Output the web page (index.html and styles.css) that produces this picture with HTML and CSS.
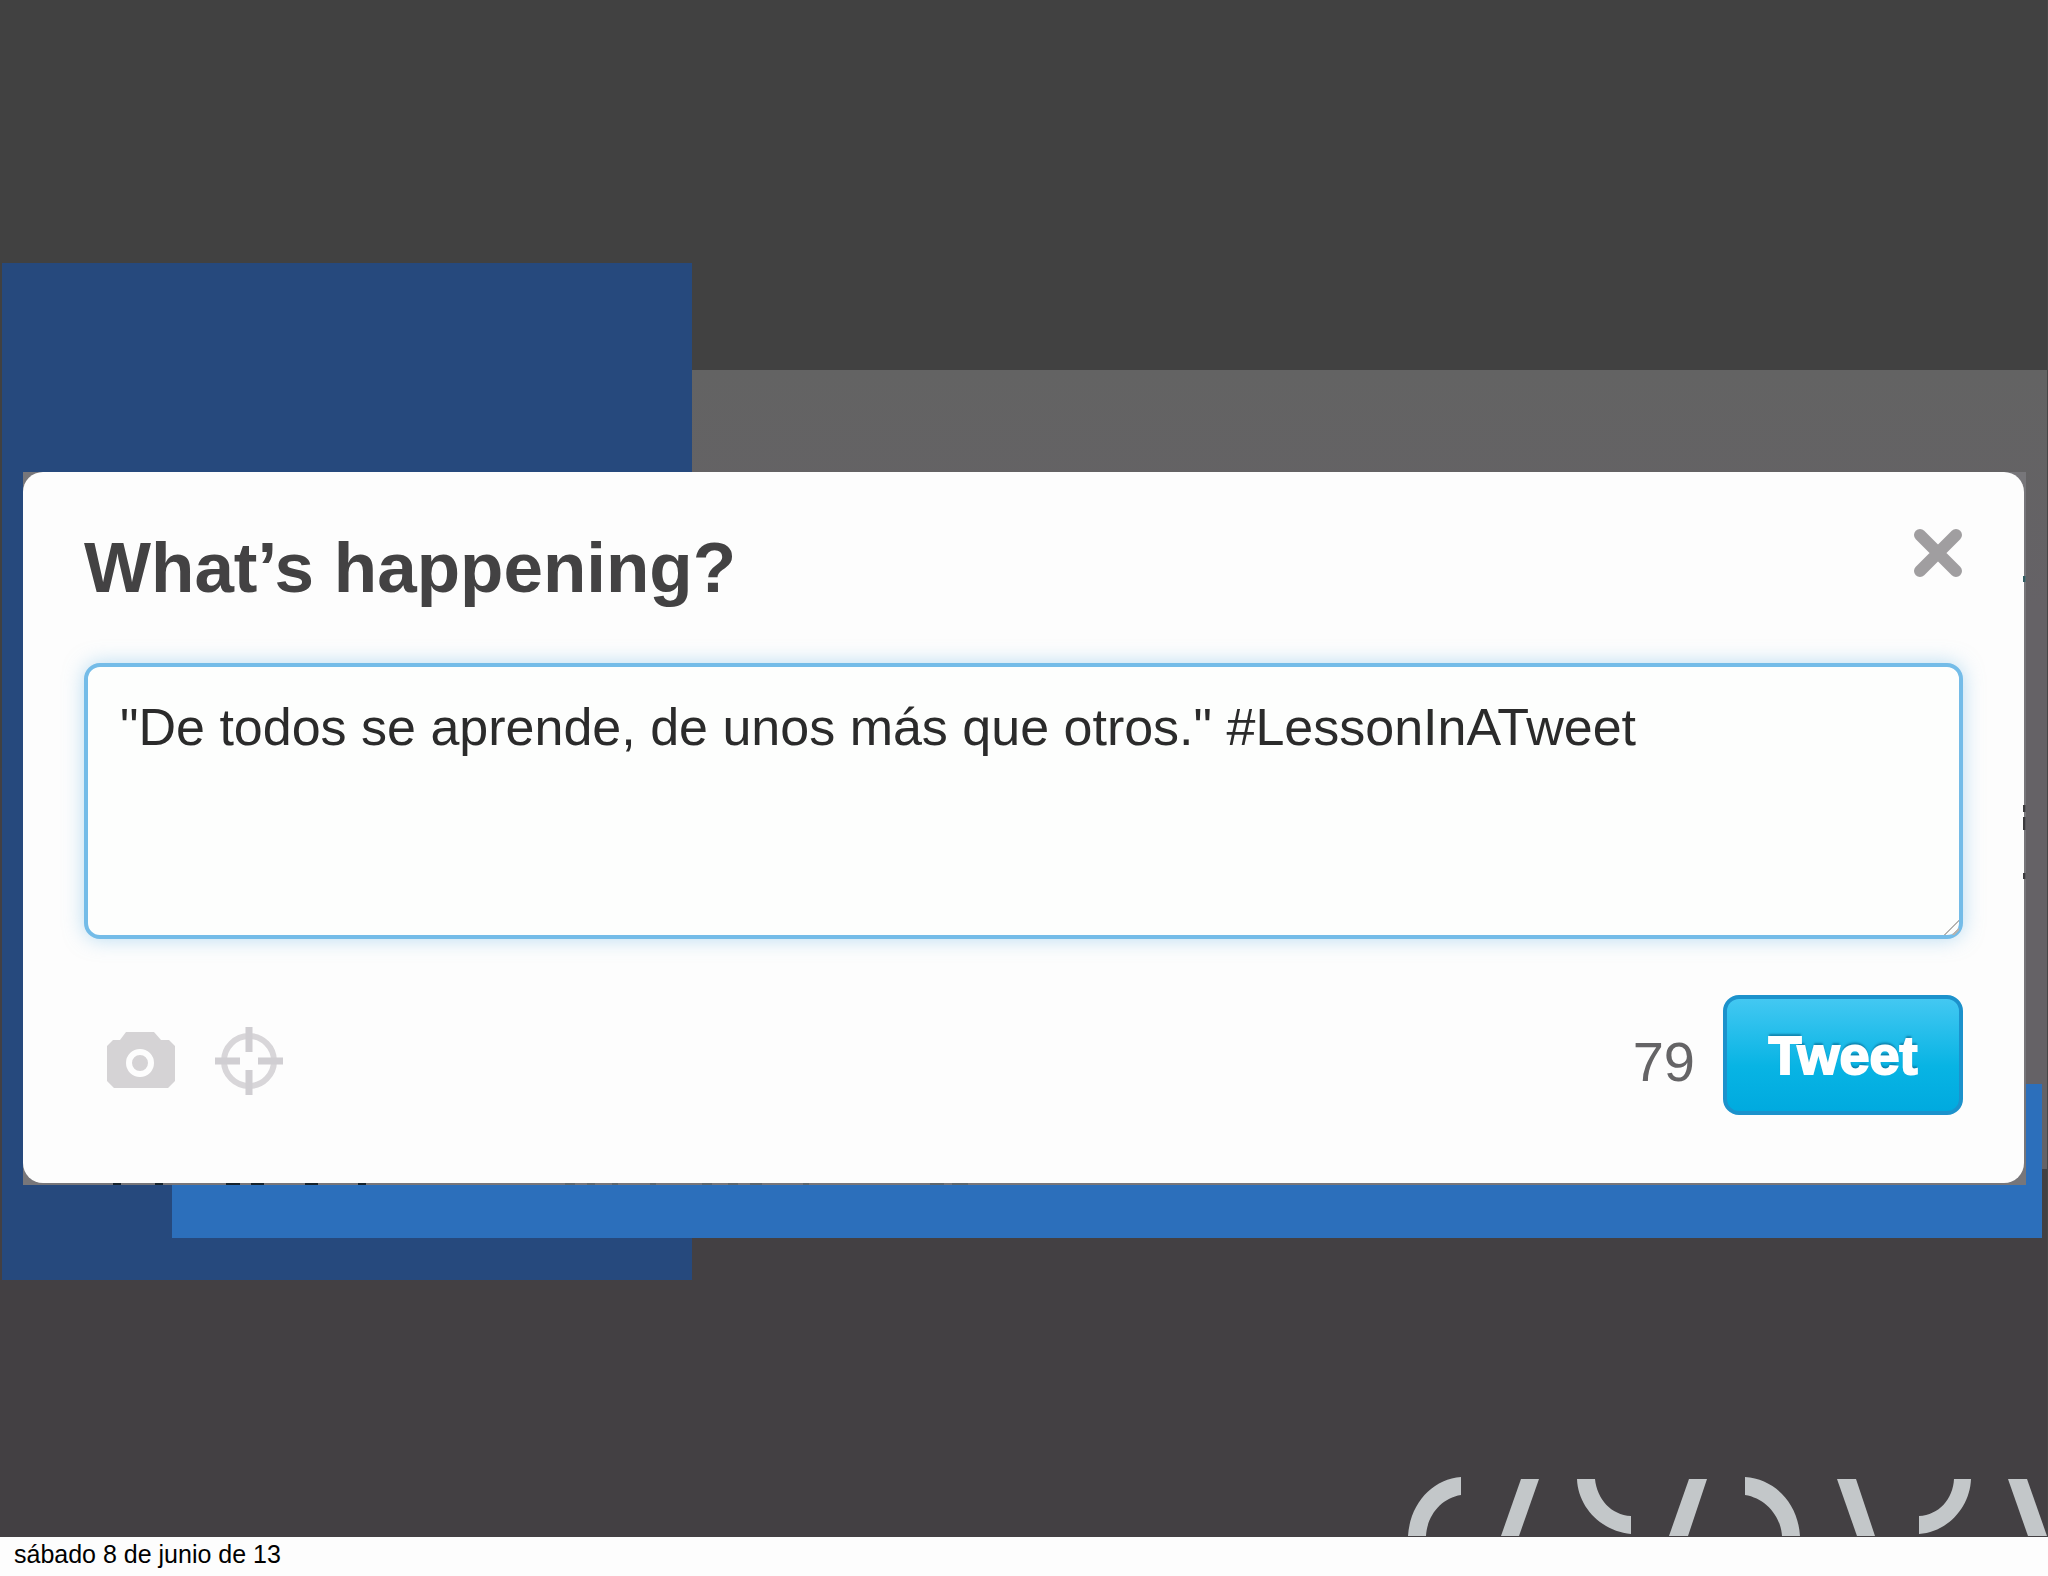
FILE: index.html
```html
<!DOCTYPE html>
<html lang="es">
<head>
    <meta charset="UTF-8">
    <meta name="viewport" content="width=device-width, initial-scale=1.0">
    <title>What’s happening?</title>
    <link rel="stylesheet" href="styles.css">
</head>
<body>
    <main class="slide">
        <div class="block block-navy"></div>
        <div class="block block-grey"></div>
        <div class="block block-blue"></div>

        <div class="frame">
            <form class="dialog">
                <header class="dialog-header">
                    <h1><label for="tweet">What’s happening?</label></h1>
                    <button type="button" class="icon-button" aria-label="Close">
                        <svg width="50" height="50" viewBox="0 0 50 50">
                            <path d="M7 7L43 43M43 7L7 43" stroke="#a09ea0" stroke-width="12" stroke-linecap="round"/>
                        </svg>
                    </button>
                </header>

                <textarea id="tweet" name="tweet" spellcheck="false">"De todos se aprende, de unos más que otros." #LessonInATweet</textarea>

                <div class="toolbar">
                    <div class="tools">
                        <button type="button" class="icon-button" aria-label="Add photo">
                            <svg width="70" height="70" viewBox="0 0 70 70">
                                <path d="M20 6H48L55 14H63L69 20V55L62 62H8L1 55V20L7 14H14Z" fill="#d5d3d5"/>
                                <circle cx="34" cy="37" r="11" fill="none" stroke="#fdfdfd" stroke-width="6"/>
                            </svg>
                        </button>
                        <button type="button" class="icon-button" aria-label="Add location">
                            <svg width="70" height="70" viewBox="0 0 70 70">
                                <circle cx="35" cy="35" r="25" fill="none" stroke="#d8d6d9" stroke-width="6"/>
                                <path d="M35 1V26M35 44V69M1 35H26M44 35H69" stroke="#d0ced2" stroke-width="7"/>
                            </svg>
                        </button>
                        <output class="counter" for="tweet">79</output>
                    </div>
                    <button type="submit" class="tweet-button">Tweet</button>
                </div>
            </form>
            <!-- tips of the slide text that show past the frame -->
            <svg class="edge-bottom" width="1000" height="2" viewBox="0 0 1000 2">
                <path d="M90 1h8M132 1h8M203 1h14M228 1h13M282 1h13M335 1h8" stroke="#17232c" stroke-width="2"/>
                <path d="M542 1h10M564 1h8M589 1h6M627 1h6M679 1h10M705 1h10M727 1h12M780 1h6M907 1h14M929 1h16" stroke="#5f666b" stroke-width="2"/>
            </svg>
            <svg class="edge-right" width="3" height="420" viewBox="0 0 3 420">
                <path d="M1 104v6" stroke="#315c62" stroke-width="3"/>
                <path d="M1 333v7M1 345v13M1 401v6" stroke="#3c3b3e" stroke-width="3"/>
            </svg>
        </div>

        <svg class="strokes" width="648" height="66" viewBox="0 0 648 66" fill="#c3c7c9">
            <path d="M9 65C11 32 34 8 62 6V24C42 27 28 45 27 65Z"/>
            <path d="M122 8H140L120 65H102Z"/>
            <path d="M178 8H196C198 28 212 44 232 45V63C202 60 179 36 178 8Z"/>
            <path d="M290 8H308L289 65H270Z"/>
            <path d="M346 6C376 8 399 32 401 65H383C382 45 366 27 346 24Z"/>
            <path d="M438 8H457L476 65H458Z"/>
            <path d="M555 8H572C571 36 549 61 520 63V45C540 44 554 28 555 8Z"/>
            <path d="M609 8H628L648 65H629Z"/>
        </svg>
    </main>
    <footer class="date">sábado 8 de junio de 13</footer>
</body>
</html>
```

FILE: styles.css
```css
* {
    box-sizing: border-box;
}

body {
    margin: 0;
    min-height: 100vh;
    display: flex;
    flex-direction: column;
    background-color: #fdfdfd;
    font-family: "Liberation Sans", Arial, sans-serif;
}

/* the coloured blocks and the dialog overlap on one grid */
.slide {
    flex: 1;
    display: grid;
    grid-template-columns: 2px 21px 149px 520px 1fr 16px 5px;
    grid-template-rows: 263px 107px 102px auto 85px 16px 53px 42px 1fr;
    background: linear-gradient(#414141 50%, #434043 50%);
    border-right: 1px solid #474747;
}

.block-navy {
    grid-area: 2 / 2 / 9 / 5;
    background-color: #26497d;
}

.block-grey {
    grid-area: 3 / 5 / 6 / 8;
    background: linear-gradient(#636363, #656266 30%);
}

.block-blue {
    grid-area: 5 / 4 / 8 / 7;
    background-color: #2c6fbb;
}

.frame {
    grid-area: 4 / 3 / 7 / 6;
    position: relative;
    padding: 0 2px 2px 0;
    background-color: #77767a;
}

.dialog {
    padding: 56px 61px 68px 61px;
    border-radius: 20px;
    background-color: #fdfdfd;
}

.dialog-header {
    display: flex;
    justify-content: space-between;
    align-items: flex-start;
    margin-bottom: 55px;
}

h1 {
    margin: 0;
    color: #434243;
    font-size: 71px;
    line-height: 80px;
}

.icon-button {
    padding: 0;
    border: none;
    background: none;
    cursor: pointer;
}

.icon-button svg {
    display: block;
}

textarea {
    display: block;
    width: 100%;
    height: 276px;
    padding: 30px 32px;
    border: 4px solid #74bce8;
    border-radius: 16px;
    outline: none;
    background-color: #fdfefd;
    box-shadow: 0 0 20px rgba(116, 188, 232, 0.5);
    color: #2b2b2b;
    font-family: inherit;
    font-size: 52px;
    line-height: 60px;
    resize: vertical;
}

textarea::-webkit-scrollbar {
    width: 18px;
}

textarea::-webkit-resizer {
    background: linear-gradient(135deg, transparent 48%, #b5b3b0 48%, #b5b3b0 56%, transparent 56%, transparent 74%, #b5b3b0 74%, #b5b3b0 84%, transparent 84%);
}

.toolbar {
    display: flex;
    gap: 28px;
    margin-top: 56px;
}

.tools {
    flex: 1;
    display: flex;
    align-items: center;
    gap: 38px;
    padding: 12px 0 0 22px;
}

.counter {
    margin-left: auto;
    color: #656466;
    font-size: 56px;
}

.tweet-button {
    width: 240px;
    height: 120px;
    padding: 0;
    border: 4px solid #1c92cc;
    border-radius: 16px;
    background: linear-gradient(#43c8f2, #08b4e4 60%, #00aadf);
    color: #ffffff;
    font-family: inherit;
    font-size: 54px;
    font-weight: bold;
    text-shadow: 0 -3px 2px rgba(0, 80, 120, 0.5);
    -webkit-text-stroke: 2px #ffffff;
    cursor: pointer;
}

.edge-bottom {
    position: absolute;
    bottom: 0;
    left: 0;
}

.edge-right {
    position: absolute;
    top: 0;
    right: 0;
}

.strokes {
    grid-area: 9 / 1 / 10 / 8;
    justify-self: end;
    align-self: end;
}

.date {
    padding: 4px 14px 8px;
    color: #000000;
    font-size: 25px;
    line-height: 27px;
}
```
